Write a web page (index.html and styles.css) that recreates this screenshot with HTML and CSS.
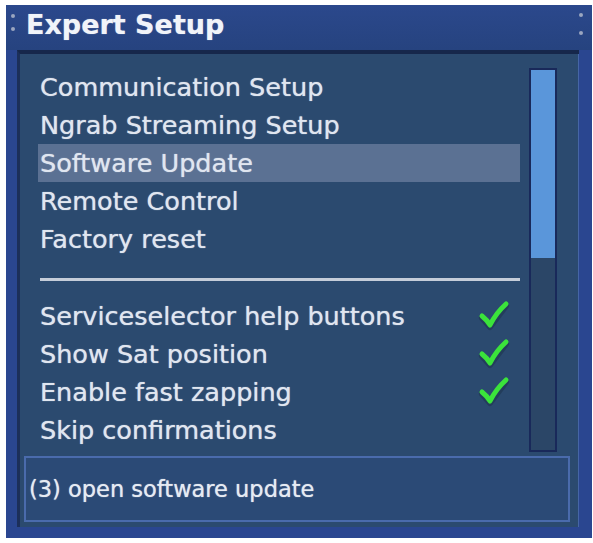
FILE: index.html
```html
<!DOCTYPE html>
<html>
<head>
<meta charset="utf-8">
<link rel="stylesheet" href="styles.css">
</head>
<body>
<div class="panel">
  <div class="titlebar">
    <span class="dots"><i></i><i></i></span>
    <span class="title">Expert Setup</span>
    <span class="dots right"><i></i><i></i></span>
  </div>
  <div class="inner">
    <div class="main">
      <div class="list">
        <div class="row">Communication Setup</div>
        <div class="row">Ngrab Streaming Setup</div>
        <div class="row selected">Software Update</div>
        <div class="row">Remote Control</div>
        <div class="row">Factory reset</div>
        <div class="divider"></div>
        <div class="row"><span>Serviceselector help buttons</span><svg class="check" viewBox="0 0 32 32"><path class="shadow" d="M4 18 L12 27 L28 6"/><path class="tick" d="M4 16 Q9 20 12 25 Q18 13 28 4"/></svg></div>
        <div class="row"><span>Show Sat position</span><svg class="check" viewBox="0 0 32 32"><path class="shadow" d="M4 18 L12 27 L28 6"/><path class="tick" d="M4 16 Q9 20 12 25 Q18 13 28 4"/></svg></div>
        <div class="row"><span>Enable fast zapping</span><svg class="check" viewBox="0 0 32 32"><path class="shadow" d="M4 18 L12 27 L28 6"/><path class="tick" d="M4 16 Q9 20 12 25 Q18 13 28 4"/></svg></div>
        <div class="row"><span>Skip confirmations</span></div>
      </div>
      <div class="scrollbar"><div class="thumb"></div></div>
    </div>
    <div class="status">(3) open software update</div>
  </div>
</div>
</body>
</html>
```
FILE: styles.css
```css
html, body {
  margin: 0;
  padding: 0;
  background: #ffffff;
}
body {
  width: 593px;
  height: 543px;
  overflow: hidden;
}
.panel {
  margin: 5px 0 0 6px;
  width: 586px;
  height: 533px;
  box-sizing: border-box;
  background: #2a4690;
  padding: 0 13px 11px 11px;
  display: flex;
  flex-direction: column;
  font-family: "DejaVu Sans", "Verdana", sans-serif;
  color: #e0e6f0;
}
.titlebar {
  height: 45px;
  margin: 0 -13px 0 -11px;
  display: flex;
  align-items: center;
  background: linear-gradient(#2b488c, #26437f);
}
.title {
  flex: 1;
  font-weight: bold;
  font-size: 27px;
  padding-left: 11px;
  margin-top: -6px;
  color: #f1f4f9;
  text-shadow: 0 0 1px rgba(255,255,255,0.6);
}
.dots {
  display: flex;
  flex-direction: column;
  gap: 9px;
  margin-left: 5px;
  margin-top: -10px;
}
.dots i {
  display: block;
  width: 4px;
  height: 4px;
  border-radius: 2px;
  background: #9aa6c0;
}
.dots.right {
  margin: -8px 9px 0 0;
  gap: 14px;
}
.inner {
  flex: 1;
  background: #2b4a6f;
  border-left: 3px solid #1c2f5a;
  border-top: 4px solid #16274b;
  box-shadow: inset -1px 0 0 #4565a6;
  box-sizing: border-box;
  padding: 0 9px 5px 4px;
  display: flex;
  flex-direction: column;
}
.main {
  display: flex;
  align-items: flex-start;
  padding: 14px 0 0 14px;
  height: 384px;
}
.list {
  width: 482px;
}
.row {
  height: 38px;
  display: flex;
  align-items: center;
  justify-content: space-between;
  padding: 0 10px 0 2px;
  font-size: 25.5px;
  white-space: nowrap;
  text-shadow: 0 0 1px rgba(230,236,245,0.8);
}
.row.selected {
  background: #5b7193;
}
.divider {
  height: 3px;
  margin: 20px 0 16px 2px;
  background: #c5cdd9;
}
.check {
  width: 32px;
  height: 32px;
  margin-right: 0;
}
.check path {
  fill: none;
  stroke-linecap: round;
  stroke-linejoin: round;
}
.check .shadow {
  stroke: #1b3048;
  stroke-width: 6;
  opacity: 0.5;
}
.check .tick {
  stroke: #3be33b;
  stroke-width: 5;
}
.scrollbar {
  margin-left: 9px;
  width: 28px;
  height: 384px;
  box-sizing: border-box;
  border: 2px solid #19295a;
  background: #2b4667;
}
.thumb {
  height: 188px;
  background: #5a96da;
}
.status {
  margin-top: 4px;
  height: 66px;
  box-sizing: border-box;
  border: 2px solid #4a6bac;
  background: #2b4a76;
  display: flex;
  align-items: center;
  padding-left: 3px;
  font-size: 22.5px;
  color: #e6ebf3;
  text-shadow: 0 0 1px rgba(230,236,245,0.8);
}
```
